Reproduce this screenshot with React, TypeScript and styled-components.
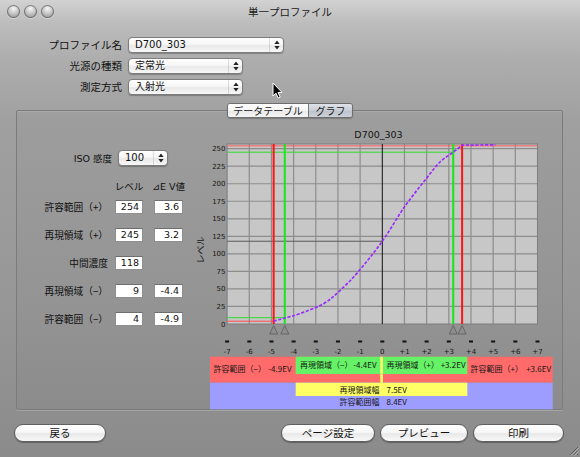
import React from 'react';
import styled, { createGlobalStyle } from 'styled-components';

const FONT = `"Lucida Grande", "DejaVu Sans", "Noto Sans CJK JP", sans-serif`;
const CJK = `"Noto Sans CJK JP", "Noto Sans", sans-serif`;

const GlobalStyle = createGlobalStyle`
  html, body { margin: 0; padding: 0; }
  body { width: 580px; height: 457px; overflow: hidden; font-family: ${FONT}; color: #111; }
  * { box-sizing: border-box; }
`;

const Window = styled.div`
  position: relative;
  width: 580px;
  height: 457px;
  display: flex;
  flex-direction: column;
  overflow: hidden;
  background: linear-gradient(
    to bottom,
    #d2d2d2 0px,
    #bdbdbd 22px,
    #adadad 60px,
    #a0a0a0 120px,
    #979797 300px,
    #8b8b8b 457px
  );
`;

const TitleBar = styled.div`
  flex: none;
  height: 22px;
  padding: 0 7px;
  display: grid;
  grid-template-columns: 1fr auto 1fr;
  align-items: center;
`;

const Lights = styled.div`
  display: flex;
  gap: 4px;
`;

const Light = styled.span`
  width: 13px;
  height: 13px;
  border-radius: 50%;
  background: radial-gradient(circle at 50% 28%, #f6f6f6 0%, #cdcdcd 38%, #9d9d9d 78%, #8c8c8c 100%);
  box-shadow: inset 0 0 0 1px rgba(70, 70, 70, 0.6), 0 1px 0 rgba(255, 255, 255, 0.35);
`;

const Title = styled.div`
  font-family: ${CJK};
  font-size: 10.5px;
  color: #1b1b1b;
`;

const Form = styled.div`
  margin-top: 15px;
  display: grid;
  grid-template-columns: 122px max-content;
  column-gap: 6px;
  row-gap: 5px;
  align-items: center;
`;

const FormLabel = styled.div`
  font-family: ${CJK};
  font-size: 10.5px;
  text-align: right;
  color: #111;
  line-height: 16px;
`;

const PopUpBox = styled.div<{ $w: number }>`
  width: ${(p) => p.$w}px;
  height: 16px;
  display: flex;
  align-items: stretch;
  border: 1px solid #7c7c7c;
  border-radius: 4px;
  background: linear-gradient(to bottom, #ffffff 0%, #f6f6f6 45%, #e9e9e9 55%, #f7f7f7 100%);
  box-shadow: 0 1px 1px rgba(0, 0, 0, 0.25);
`;

const PopUpValue = styled.div`
  flex: 1;
  padding-left: 6px;
  font-size: 10px;
  line-height: 14px;
  color: #111;
  white-space: nowrap;
  overflow: hidden;
`;

const Stepper = styled.div`
  flex: none;
  width: 14px;
  border-left: 1px solid rgba(0, 0, 0, 0.12);
  display: flex;
  align-items: center;
  justify-content: center;
`;

const TabBar = styled.div`
  position: relative;
  z-index: 1;
  margin-top: 8px;
  display: flex;
  justify-content: center;
`;

const Segments = styled.div`
  display: flex;
  height: 15px;
  border: 1px solid #6e6e6e;
  border-radius: 3px;
  overflow: hidden;
  box-shadow: 0 1px 1px rgba(0, 0, 0, 0.2);
`;

const Segment = styled.div<{ $w: number; $active?: boolean }>`
  width: ${(p) => p.$w}px;
  font-family: ${CJK};
  font-size: 10px;
  line-height: 13px;
  text-align: center;
  color: #1a1a1a;
  background: ${(p) =>
    p.$active
      ? 'linear-gradient(to bottom, #dfe2e8 0%, #c9cdd6 50%, #bcc1cb 51%, #cdd1d9 100%)'
      : 'linear-gradient(to bottom, #ffffff 0%, #f4f4f4 50%, #e8e8e8 51%, #f6f6f6 100%)'};
  & + & {
    border-left: 1px solid #7a7a7a;
  }
`;

const Panel = styled.div`
  margin: -8px 17px 0 16px;
  height: 300px;
  flex: none;
  display: flex;
  align-items: flex-start;
  border: 1px solid #7b7b7b;
  border-radius: 2px;
  background: rgba(0, 0, 0, 0.015);
  box-shadow: inset 0 1px 0 rgba(255, 255, 255, 0.12), 0 1px 0 rgba(255, 255, 255, 0.2);
`;

const LeftCol = styled.div`
  flex: none;
  width: 179px;
  padding-top: 39px;
  display: flex;
  flex-direction: column;
`;

const IsoRow = styled.div`
  display: flex;
  align-items: center;
  height: 16px;
`;

const IsoLabel = styled.div`
  width: 95px;
  margin-right: 6px;
  text-align: right;
  font-size: 9.5px;
  white-space: nowrap;
`;

const HeadRow = styled.div`
  margin-top: 15px;
  height: 12px;
  padding-left: 98px;
  display: flex;
  gap: 11px;
`;

const HeadCell = styled.div<{ $w: number }>`
  width: ${(p) => p.$w}px;
  display: flex;
  justify-content: center;
  font-size: 9.5px;
  line-height: 12px;
  white-space: nowrap;
`;

const Rows = styled.div`
  margin-top: 7px;
  display: flex;
  flex-direction: column;
  gap: 14px;
`;

const DataRow = styled.div`
  display: flex;
  align-items: center;
  height: 14px;
`;

const RowLabel = styled.div`
  width: 91px;
  text-align: right;
  font-family: ${CJK};
  font-size: 9.7px;
  white-space: nowrap;
`;

const NumBox = styled.div<{ $w: number; $gap: number }>`
  width: ${(p) => p.$w}px;
  margin-left: ${(p) => p.$gap}px;
  height: 14px;
  padding-right: 3px;
  background: #fff;
  border: 1px solid #8e8e8e;
  border-top-color: #6e6e6e;
  font-size: 9.5px;
  line-height: 12px;
  text-align: right;
  color: #111;
`;

const ChartSvg = styled.svg`
  flex: none;
  margin-top: 13px;
  overflow: visible;
  text {
    font-family: ${FONT};
    fill: #151515;
  }
  text.cjk {
    font-family: ${CJK};
  }
`;

const ButtonRow = styled.div`
  margin-top: 14px;
  padding: 0 16px 0 14px;
  display: flex;
  justify-content: space-between;
`;

const ButtonGroup = styled.div`
  display: flex;
  gap: 5px;
`;

const PushButton = styled.div<{ $w: number }>`
  width: ${(p) => p.$w}px;
  height: 18px;
  border-radius: 9px;
  border: 1px solid #5f5f5f;
  background: linear-gradient(to bottom, #ffffff 0%, #f7f7f7 45%, #e8e8e8 55%, #f9f9f9 100%);
  box-shadow: 0 1px 1px rgba(0, 0, 0, 0.3);
  font-family: ${CJK};
  font-size: 10.5px;
  line-height: 16px;
  text-align: center;
  color: #111;
`;

const Grip = styled.svg`
  position: absolute;
  right: 1px;
  bottom: 1px;
`;

const Cursor = styled.svg`
  position: absolute;
  left: 272px;
  top: 82px;
`;

const StepperArrows = () => (
  <svg width="6" height="10" viewBox="0 0 6 10">
    <path d="M3 0.5 L5.6 4 L0.4 4 Z" fill="#222" />
    <path d="M3 9.5 L5.6 6 L0.4 6 Z" fill="#222" />
  </svg>
);

const PopUp = ({ w, value }: { w: number; value: string }) => (
  <PopUpBox $w={w}>
    <PopUpValue>{value}</PopUpValue>
    <Stepper>
      <StepperArrows />
    </Stepper>
  </PopUpBox>
);

// ---- chart geometry ----
const X0 = 186.3;
const DX = 22.17;
const Y0 = 200;
const DY = 0.7013;
const toX = (ev: number) => X0 + ev * DX;
const toY = (v: number) => Y0 - v * DY;
const PL = toX(-7);
const PR = toX(7);
const PT = 20;
const PB = 200;

const curve: [number, number][] = [
  [-4.9, 4],
  [-4.4, 8.5],
  [-3.7, 15],
  [-2.65, 29],
  [-1.9, 48],
  [-1.1, 74],
  [0, 118],
  [1, 167],
  [2, 208],
  [2.6, 231],
  [3.2, 245],
  [3.6, 255],
];

function smoothPath(pts: [number, number][]) {
  const p = pts.map(([e, v]) => [toX(e), toY(v)]);
  let d = `M${p[0][0].toFixed(2)},${p[0][1].toFixed(2)}`;
  for (let i = 0; i < p.length - 1; i++) {
    const p0 = p[i - 1] || p[i];
    const p1 = p[i];
    const p2 = p[i + 1];
    const p3 = p[i + 2] || p2;
    const c1x = p1[0] + (p2[0] - p0[0]) / 6;
    const c1y = p1[1] + (p2[1] - p0[1]) / 6;
    const c2x = p2[0] - (p3[0] - p1[0]) / 6;
    const c2y = p2[1] - (p3[1] - p1[1]) / 6;
    d += ` C${c1x.toFixed(2)},${c1y.toFixed(2)} ${c2x.toFixed(2)},${c2y.toFixed(2)} ${p2[0].toFixed(2)},${p2[1].toFixed(2)}`;
  }
  d += ` L${toX(5.1).toFixed(2)},${toY(255.5).toFixed(2)}`;
  return d;
}

const evs = Array.from({ length: 15 }, (_, i) => i - 7);
const levels = Array.from({ length: 11 }, (_, i) => i * 25);

const Chart = () => {
  const xr1 = toX(-4.9);
  const xg1 = toX(-4.4);
  const xg2 = toX(3.2);
  const xr2 = toX(3.6);
  return (
    <ChartSvg width={360} height={286} viewBox="0 0 360 286">
      <text x={182.5} y={13.5} fontSize={9.5} textAnchor="middle">
        D700_303
      </text>
      <text className="cjk" fontSize={9} textAnchor="middle" transform="translate(8,126) rotate(-90)">
        レベル
      </text>
      {levels.map((v) => (
        <text key={v} x={29.5} y={toY(v) + 2.5} fontSize={7} textAnchor="end">
          {v}
        </text>
      ))}
      <rect x={PL} y={PT} width={PR - PL} height={PB - PT} fill="#c7c7c7" />
      {levels.slice(1).map((v) => (
        <line key={v} x1={PL} x2={PR} y1={toY(v)} y2={toY(v)} stroke="#8d8d8d" strokeWidth={1.2} />
      ))}
      {evs.slice(1, -1).map((e) =>
        e === 0 ? null : (
          <line key={e} x1={toX(e)} x2={toX(e)} y1={PT} y2={PB} stroke="#8d8d8d" strokeWidth={1.2} />
        )
      )}
      <rect x={PL} y={PT} width={PR - PL} height={PB - PT} fill="none" stroke="#7d7d7d" strokeWidth={1} />
      <line x1={PL} x2={toX(0)} y1={toY(118)} y2={toY(118)} stroke="#5a5a5a" strokeWidth={1} />
      <line x1={PL} x2={PR} y1={toY(254)} y2={toY(254)} stroke="#ff5a5a" strokeWidth={1} />
      <line x1={PL} x2={xg2} y1={toY(245)} y2={toY(245)} stroke="#2bdc2b" strokeWidth={1} />
      <line x1={PL} x2={xg1} y1={toY(9)} y2={toY(9)} stroke="#2bdc2b" strokeWidth={1} />
      <line x1={PL} x2={xr1} y1={toY(4)} y2={toY(4)} stroke="#ff4a4a" strokeWidth={1} />
      <line x1={toX(0)} x2={toX(0)} y1={PT} y2={PB} stroke="#111" strokeWidth={1} />
      <line x1={xr1} x2={xr1} y1={PT} y2={PB} stroke="#ff1414" strokeWidth={2} />
      <line x1={xr2} x2={xr2} y1={PT} y2={PB} stroke="#ff1414" strokeWidth={2} />
      <line x1={xg1} x2={xg1} y1={PT} y2={PB} stroke="#19e619" strokeWidth={2} />
      <line x1={xg2} x2={xg2} y1={PT} y2={PB} stroke="#19e619" strokeWidth={2} />
      <path d={smoothPath(curve)} fill="none" stroke="#9a2cff" strokeWidth={1.7} strokeDasharray="3.2 1.6" />
      {[xr1, xg1, xg2, xr2].map((x, i) => (
        <path key={i} d={`M${x},201.5 L${x + 4},210 L${x - 4},210 Z`} fill="#8e8e8e" stroke="#5c5c5c" strokeWidth={0.8} />
      ))}
      {evs.map((e) => (
        <rect key={e} x={toX(e) - 2} y={216.5} width={4} height={2} fill="#111" />
      ))}
      {evs.map((e) => (
        <text key={e} x={toX(e)} y={230} fontSize={7} textAnchor="middle">
          {e > 0 ? `+${e}` : `${e}`}
        </text>
      ))}

      <rect x={14} y={232.7} width={342.7} height={26} fill="#ff6b6b" />
      <rect x={99.7} y={232.7} width={171.6} height={17.3} fill="#66f266" />
      <rect x={14} y={258.7} width={342.7} height={26.6} fill="#9d9dff" />
      <rect x={99.7} y={258.7} width={171.6} height={13.3} fill="#ffff66" />
      <rect x={184.3} y={232.7} width={2.6} height={26} fill="#ffff66" />

      <text className="cjk" x={17.5} y={248} fontSize={8}>許容範囲（−）</text>
      <text className="cjk" x={95.5} y={248} fontSize={8} textAnchor="end">-4.9EV</text>
      <text className="cjk" x={104} y={244} fontSize={8}>再現領域（−）</text>
      <text className="cjk" x={180.5} y={244} fontSize={8} textAnchor="end">-4.4EV</text>
      <text className="cjk" x={190.5} y={244} fontSize={8}>再現領域（+）</text>
      <text className="cjk" x={269.5} y={244} fontSize={8} textAnchor="end">+3.2EV</text>
      <text className="cjk" x={274.5} y={248} fontSize={8}>許容範囲（+）</text>
      <text className="cjk" x={355} y={248} fontSize={8} textAnchor="end">+3.6EV</text>
      <text className="cjk" x={183.5} y={268.5} fontSize={8} textAnchor="end">再現領域幅</text>
      <text className="cjk" x={190.5} y={268.5} fontSize={8}>7.5EV</text>
      <text className="cjk" x={183.5} y={280.5} fontSize={8} textAnchor="end">許容範囲幅</text>
      <text className="cjk" x={190.5} y={280.5} fontSize={8}>8.4EV</text>
    </ChartSvg>
  );
};

const rows = [
  { label: '許容範囲（+）', level: '254', ev: '3.6' },
  { label: '再現領域（+）', level: '245', ev: '3.2' },
  { label: '中間濃度', level: '118', ev: null },
  { label: '再現領域（−）', level: '9', ev: '-4.4' },
  { label: '許容範囲（−）', level: '4', ev: '-4.9' },
];

export default function App() {
  return (
    <>
      <GlobalStyle />
      <Window>
        <TitleBar>
          <Lights>
            <Light />
            <Light />
            <Light />
          </Lights>
          <Title>単一プロファイル</Title>
          <div />
        </TitleBar>

        <Form>
          <FormLabel>プロファイル名</FormLabel>
          <PopUp w={156} value="D700_303" />
          <FormLabel>光源の種類</FormLabel>
          <PopUp w={115} value="定常光" />
          <FormLabel>測定方式</FormLabel>
          <PopUp w={115} value="入射光" />
        </Form>

        <TabBar>
          <Segments>
            <Segment $w={80}>データテーブル</Segment>
            <Segment $w={44} $active>
              グラフ
            </Segment>
          </Segments>
        </TabBar>

        <Panel>
          <LeftCol>
            <IsoRow>
              <IsoLabel>ISO 感度</IsoLabel>
              <PopUp w={50} value="100" />
            </IsoRow>
            <HeadRow>
              <HeadCell $w={28}>レベル</HeadCell>
              <HeadCell $w={29}>⊿E V値</HeadCell>
            </HeadRow>
            <Rows>
              {rows.map((r) => (
                <DataRow key={r.label}>
                  <RowLabel>{r.label}</RowLabel>
                  <NumBox $w={28} $gap={7}>
                    {r.level}
                  </NumBox>
                  {r.ev !== null && (
                    <NumBox $w={29} $gap={11}>
                      {r.ev}
                    </NumBox>
                  )}
                </DataRow>
              ))}
            </Rows>
          </LeftCol>
          <Chart />
        </Panel>

        <ButtonRow>
          <PushButton $w={92}>戻る</PushButton>
          <ButtonGroup>
            <PushButton $w={94}>ページ設定</PushButton>
            <PushButton $w={88}>プレビュー</PushButton>
            <PushButton $w={91}>印刷</PushButton>
          </ButtonGroup>
        </ButtonRow>

        <Cursor width="11" height="17" viewBox="0 0 11 17">
          <path d="M1 1 L1 14 L4 11.2 L6.2 16 L8.2 15.1 L6 10.4 L10 10.4 Z" fill="#000" stroke="#fff" strokeWidth="1" />
        </Cursor>
        <Grip width="11" height="11" viewBox="0 0 11 11">
          <path d="M10 2 L2 10 M10 5.5 L5.5 10 M10 9 L9 10" stroke="#5a5a5a" strokeWidth="1" />
          <path d="M10.8 2.8 L2.8 10.8 M10.8 6.3 L6.3 10.8" stroke="#c8c8c8" strokeWidth="0.8" />
        </Grip>
      </Window>
    </>
  );
}
